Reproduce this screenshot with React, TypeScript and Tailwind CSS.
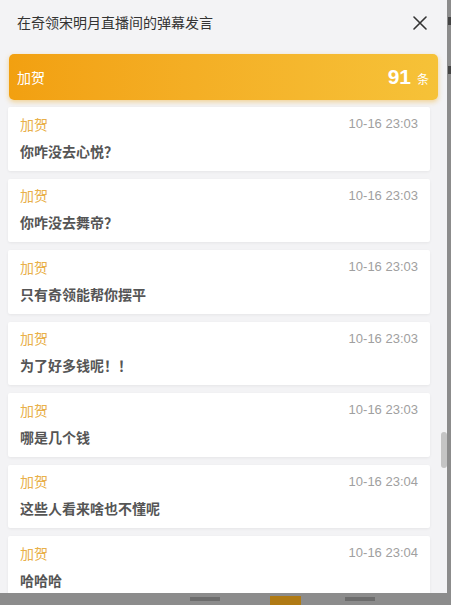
import React from "react";

const items = [
  { t: "10-16 23:03", c: "你咋没去心悦？" },
  { t: "10-16 23:03", c: "你咋没去舞帝？" },
  { t: "10-16 23:03", c: "只有奇领能帮你摆平" },
  { t: "10-16 23:03", c: "为了好多钱呢！！" },
  { t: "10-16 23:03", c: "哪是几个钱" },
  { t: "10-16 23:04", c: "这些人看来啥也不懂呢" },
  { t: "10-16 23:04", c: "哈哈哈" },
];

const font = { fontFamily: '"Noto Sans CJK SC", "Microsoft YaHei", sans-serif' };

export default function App() {
  return (
    <div className="relative w-[451px] h-[605px] overflow-hidden bg-[#8c8c8c]" style={font}>
      {/* background page glimpses */}
      <div className="absolute left-[448px] top-[17px] w-[3px] h-[8px] bg-[#444]" />
      <div className="absolute left-[448px] top-[66px] w-[3px] h-[8px] bg-[#444]" />
      <div className="absolute left-[270px] top-[596px] w-[31px] h-[9px] bg-[#b07a14]" />
      <div className="absolute left-[190px] top-[597px] w-[30px] h-[4px] bg-[#6d6d6d]" />
      <div className="absolute left-[345px] top-[597px] w-[30px] h-[4px] bg-[#6d6d6d]" />

      <div className="relative w-[447px] h-[593px] bg-[#f3f3f5] flex flex-col overflow-hidden">
        <div className="h-[44px] flex items-center justify-between pl-[17px] pr-[20px] shrink-0">
          <span className="text-[14px] text-[#333]">在奇领宋明月直播间的弹幕发言</span>
          <svg width="14" height="14" viewBox="0 0 14 14" className="mt-[1px]">
            <path d="M1 1 L13 13 M13 1 L1 13" stroke="#333" strokeWidth="1.6" strokeLinecap="round" />
          </svg>
        </div>

        <div className="mx-[9px] mt-[10px] h-[46px] shrink-0 rounded-[5px] bg-gradient-to-r from-[#f2a010] to-[#f6c238] shadow-[0_2px_5px_rgba(240,170,30,0.45)] flex items-center justify-between pl-[8px] pr-[9px]">
          <span className="text-[14px] text-white">加贺</span>
          <span className="flex items-baseline text-white">
            <span className="text-[21px] font-bold" style={{ fontFamily: '"Liberation Sans", Arial, sans-serif' }}>91</span>
            <span className="text-[12px] ml-[6px]">条</span>
          </span>
        </div>

        <div className="relative flex-1 overflow-hidden">
          <div className="flex flex-col gap-[8px] pt-[7px] pl-[8px] pr-[17px]">
            {items.map((it, i) => (
              <div key={i} className="bg-white rounded-[2px] shadow-[0_1px_3px_rgba(0,0,0,0.06)] h-[63.5px] shrink-0 px-[12px] pt-[7px]">
                <div className="flex items-center justify-between h-[20px]">
                  <span className="text-[14px] text-[#e9b04a]">加贺</span>
                  <span className="text-[13px] text-[#a0a0a0]" style={{ fontFamily: '"Liberation Sans", Arial, sans-serif' }}>{it.t}</span>
                </div>
                <div className="mt-[7px] h-[20px] flex items-center text-[14px] font-bold text-[#555]">{it.c}</div>
              </div>
            ))}
          </div>
          <div className="absolute right-0 top-[332px] w-[6px] h-[36px] rounded-[3px] bg-[#c4c4c4]" />
        </div>
      </div>
    </div>
  );
}
